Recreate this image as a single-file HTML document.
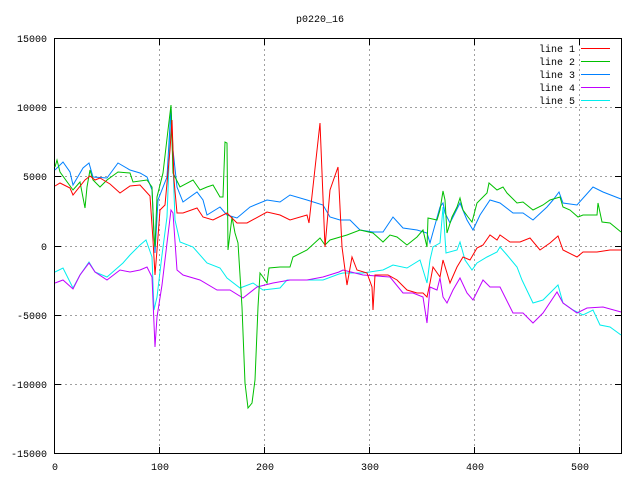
<!DOCTYPE html>
<html><head><style>
html,body{margin:0;padding:0;background:#fff;}
svg{display:block;}
text{font-family:"Liberation Mono","DejaVu Sans Mono",monospace;font-size:10px;fill:#000;}
</style></head><body>
<svg width="640" height="480" viewBox="0 0 640 480" xmlns="http://www.w3.org/2000/svg">
<rect width="640" height="480" fill="#fff"/>
<g stroke="#a0a0a0" stroke-width="1" stroke-dasharray="2,3" fill="none">
<line x1="55" y1="107.5" x2="621" y2="107.5"/>
<line x1="55" y1="176.5" x2="621" y2="176.5"/>
<line x1="55" y1="246.5" x2="621" y2="246.5"/>
<line x1="55" y1="315.5" x2="621" y2="315.5"/>
<line x1="55" y1="384.5" x2="621" y2="384.5"/>
<line x1="159.5" y1="39" x2="159.5" y2="453"/>
<line x1="264.5" y1="39" x2="264.5" y2="453"/>
<line x1="369.5" y1="39" x2="369.5" y2="453"/>
<line x1="474.5" y1="39" x2="474.5" y2="453"/>
<line x1="579.5" y1="39" x2="579.5" y2="453"/>
<line x1="55" y1="38.5" x2="530" y2="38.5"/>
</g>
<g stroke="#000" stroke-width="1" fill="none">
<rect x="54.5" y="38.5" width="567" height="415"/>
<path d="M55 107.5h6M55 176.5h6M55 246.5h6M55 315.5h6M55 384.5h6M621 107.5h-6M621 176.5h-6M621 246.5h-6M621 315.5h-6M621 384.5h-6M159.5 453v-6M264.5 453v-6M369.5 453v-6M474.5 453v-6M579.5 453v-6M159.5 39v6M264.5 39v6M369.5 39v6M474.5 39v6M579.5 39v6"/>
</g>
<g text-anchor="end">
<text x="47" y="42">15000</text>
<text x="47" y="111">10000</text>
<text x="47" y="180">5000</text>
<text x="47" y="250">0</text>
<text x="47" y="319">-5000</text>
<text x="47" y="388">-10000</text>
<text x="47" y="457">-15000</text>
</g>
<g text-anchor="middle">
<text x="55" y="470">0</text>
<text x="160" y="470">100</text>
<text x="265" y="470">200</text>
<text x="370" y="470">300</text>
<text x="475" y="470">400</text>
<text x="580" y="470">500</text>
<text x="320" y="22">p0220_16</text>
</g>
<g text-anchor="end">
<text x="575" y="52">line 1</text>
<text x="575" y="65">line 2</text>
<text x="575" y="78">line 3</text>
<text x="575" y="91">line 4</text>
<text x="575" y="104">line 5</text>
</g>
<g stroke-width="1" fill="none">
<line x1="581" y1="48.5" x2="610" y2="48.5" stroke="#ff0000"/>
<line x1="581" y1="61.5" x2="610" y2="61.5" stroke="#00c000"/>
<line x1="581" y1="74.5" x2="610" y2="74.5" stroke="#0080ff"/>
<line x1="581" y1="87.5" x2="610" y2="87.5" stroke="#c000ff"/>
<line x1="581" y1="100.5" x2="610" y2="100.5" stroke="#00eeee"/>

<polyline stroke="#00eeee" points="55,272 63,268 73,288 80,275 89,262 95,272 107,277 115,270 123,263 130,255 140,245 146,240 152,257 154,310 157,297 162,255 167,217 171,110 175,220 180,242 193,247 207,263 220,268 227,278 240,288 253,283 263,290 280,288 287,280 307,280 323,280 339,274 343,273 363,273 383,270 393,265 407,268 420,260 427,283 430,260 433,247 440,243 443,207 446,253 457,250 460,242 465,260 472,270 477,263 487,257 497,252 500,247 507,255 517,267 522,280 533,303 543,300 553,290 558,285 563,303 573,310 583,315 593,310 600,325 610,327 621,335"/>

<polyline stroke="#c000ff" points="55,283 63,280 73,289 80,275 89,263 95,272 107,280 120,270 130,272 140,270 147,267 152,277 155,347 157,317 162,285 167,243 171,210 173,213 177,270 183,275 200,280 217,290 230,290 243,298 257,287 273,283 290,280 307,280 323,277 339,272 343,270 363,275 390,277 403,293 413,293 423,297 427,323 430,287 437,290 440,278 443,297 447,303 453,290 460,278 467,293 473,300 483,280 490,287 500,287 513,313 523,313 533,323 543,313 557,292 563,303 577,313 587,308 603,307 621,312"/>

<polyline stroke="#0080ff" points="55,170 63,162 70,172 73,185 83,168 89,163 93,177 107,178 118,163 130,170 140,173 147,177 152,190 155,253 158,200 167,177 171,107 173,150 177,187 183,202 197,192 203,200 207,215 220,207 227,215 237,218 250,207 267,200 280,202 290,195 307,200 323,205 330,217 340,220 350,220 360,230 373,232 383,232 393,217 403,228 417,230 427,233 430,243 440,207 443,203 445,213 450,223 460,203 467,220 473,230 480,215 490,200 500,203 513,213 523,213 533,220 547,207 553,200 559,192 563,203 577,205 593,187 603,192 621,199"/>

<polyline stroke="#00c000" points="55,167 57,160 60,172 73,190 80,182 85,208 87,187 90,170 93,180 100,187 107,180 118,172 130,173 133,182 147,180 152,187 154,237 155,247 157,197 163,173 168,130 171,105 173,173 180,187 193,180 200,190 207,187 213,185 220,197 223,197 225,142 227,143 228,250 232,217 235,233 238,243 242,307 245,383 248,408 252,403 255,380 258,307 260,273 263,277 267,283 269,268 280,267 290,267 293,257 307,250 320,238 325,245 330,240 347,235 360,230 373,233 383,242 390,235 397,237 407,245 417,237 423,230 427,247 428,218 437,220 440,210 443,191 445,200 447,233 452,217 457,207 460,198 463,210 468,217 472,222 477,203 487,193 489,183 497,190 503,187 507,193 517,203 523,202 533,210 543,205 550,200 560,197 563,207 570,210 578,217 583,215 597,215 598,203 602,222 610,223 621,232"/>

<polyline stroke="#ff0000" points="55,186 60,183 70,188 73,195 85,180 90,176 95,180 100,178 110,184 120,193 130,186 140,185 150,196 153,240 155,275 157,250 160,210 165,205 170,150 172,120 174,180 177,213 183,213 197,208 203,217 213,220 227,213 237,223 247,223 267,212 280,215 290,220 307,215 309,223 320,123 325,247 330,190 338,167 342,247 347,285 352,257 357,270 367,273 372,287 373,310 375,275 388,275 397,280 407,290 417,293 423,293 427,297 430,283 433,267 440,277 443,260 447,273 450,283 457,267 463,257 470,260 477,248 483,245 490,235 497,240 500,235 510,242 520,242 530,238 540,250 550,243 558,236 563,250 577,257 583,252 597,252 610,250 621,250"/>
</g>
</svg>
</body></html>
